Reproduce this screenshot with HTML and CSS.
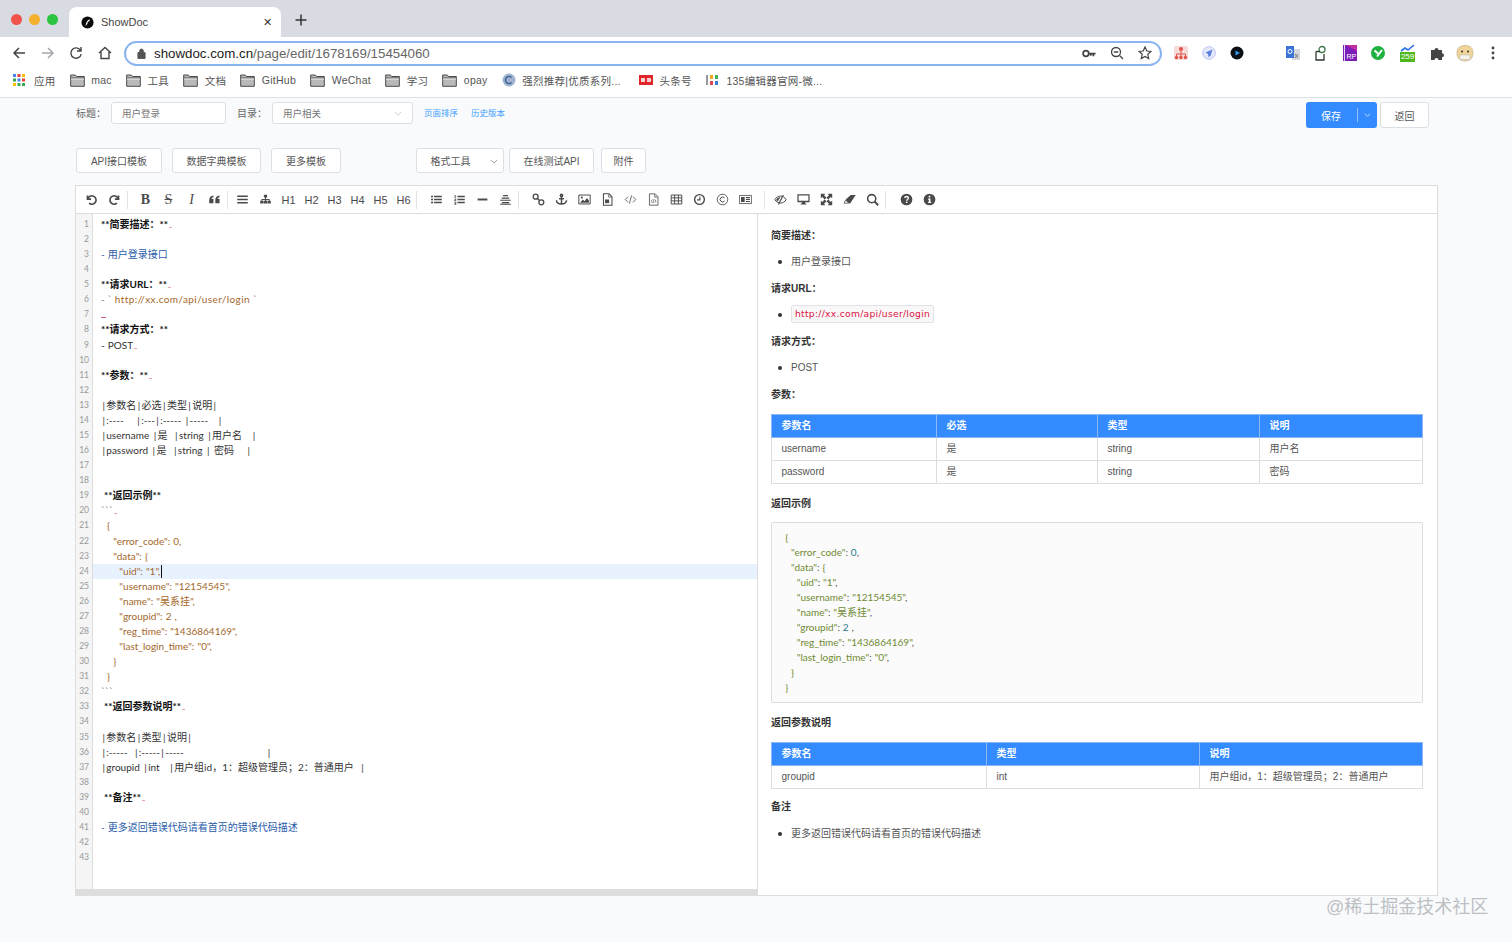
FILE: index.html
```html
<!DOCTYPE html>
<html lang="zh-CN">
  <head>
    <meta charset="utf-8">
    <title>ShowDoc</title>
    <link rel="stylesheet" href="styles.css">
  </head>
  <body>
    <svg class="sprite" width="0" height="0">
      <symbol id="i-undo" viewBox="0 0 16 16"><path d="M3 3v4.500h4.500M3.400 7.200A5.200 5.200 0 1 1 5 12.600" fill="none" stroke="currentColor" stroke-width="2"/></symbol>
      <symbol id="i-redo" viewBox="0 0 16 16"><path d="M13 3v4.500H8.500M12.600 7.200A5.200 5.200 0 1 0 11 12.600" fill="none" stroke="currentColor" stroke-width="2"/></symbol>
      <symbol id="i-quote" viewBox="0 0 16 16"><path d="M1.500 8.500C1.500 5.500 3.500 3.600 6.600 3.200v2C5 5.500 4.200 6.200 4.100 7.200h2.600v5.300H1.500zM9 8.500c0-3 2-4.900 5.100-5.300v2c-1.600.3-2.400 1-2.500 2h2.600v5.300H9z" fill="currentColor"/></symbol>
      <symbol id="i-bars" viewBox="0 0 16 16"><path d="M1.500 3h13v1.900h-13zM1.500 7h13v1.900h-13zM1.500 11h13v1.900h-13z" fill="currentColor"/></symbol>
      <symbol id="i-sitemap" viewBox="0 0 16 16"><path d="M6 2h4v3.500H8.600V7.400h4.400v2.100h1.500V13h-4V9.500h1.500V8.500H8.600v1H10V13H6V9.500h1.400v-1H4v1h1.500V13h-4V9.500H3V7.400h4.400V5.500H6z" fill="currentColor"/></symbol>
      <symbol id="i-ul" viewBox="0 0 16 16"><path d="M5 3.500h9.500v1.700H5zM5 7.200h9.500v1.700H5zM5 10.900h9.500v1.700H5z" fill="currentColor"/><circle cx="2.500" cy="4.300" r="1.300" fill="currentColor"/><circle cx="2.500" cy="8" r="1.300" fill="currentColor"/><circle cx="2.500" cy="11.700" r="1.300" fill="currentColor"/></symbol>
      <symbol id="i-ol" viewBox="0 0 16 16"><path d="M5.500 3.500h9v1.700h-9zM5.500 7.200h9v1.700h-9zM5.500 10.900h9v1.700h-9zM2 2.500h1.200v3.500H2zM1.500 7H4v.9L2.700 9.200H4v.8H1.500v-.8l1.300-1.400H1.500zM1.500 11H4v3.500H1.500v-.8h1.600v-.6H2v-.7h1.100v-.6H1.500z" fill="currentColor"/></symbol>
      <symbol id="i-minus" viewBox="0 0 16 16"><path d="M2 6.800h12v2.400H2z" fill="currentColor"/></symbol>
      <symbol id="i-pagebreak" viewBox="0 0 16 16"><path d="M5 2.500h6V4H5zM3.500 5.500h9V7h-9zM1.500 8.300h13v1.300h-13zM3.500 11h9v1.500h-9zM1.500 13.300h13v1.300h-13z" fill="currentColor"/></symbol>
      <symbol id="i-link" viewBox="0 0 16 16"><g fill="none" stroke="currentColor" stroke-width="1.600"><circle cx="4.500" cy="4.500" r="3"/><circle cx="11.500" cy="11.500" r="3"/><path d="M6.500 6.500l3 3"/></g></symbol>
      <symbol id="i-anchor" viewBox="0 0 16 16"><g fill="none" stroke="currentColor" stroke-width="1.800"><circle cx="8" cy="3" r="1.400"/><path d="M8 4.500v9.500M5 7h6M1.800 9c0 3 3 4.600 6.200 4.600S14.200 12 14.200 9"/></g></symbol>
      <symbol id="i-image" viewBox="0 0 16 16"><path d="M1 2.500h14v11H1z" fill="none" stroke="currentColor" stroke-width="1.200"/><path d="M2.500 12l3.500-4 2 2 3-4 2.500 3.500V12z" fill="currentColor"/><circle cx="4.800" cy="5.500" r="1.300" fill="currentColor"/></symbol>
      <symbol id="i-fileimg" viewBox="0 0 16 16"><path d="M3 1h7l3.500 3.500V15H3z" fill="none" stroke="currentColor" stroke-width="1.300"/><path d="M5 8h5v4.500H5z" fill="currentColor"/><path d="M9.500 1.500V5H13" fill="none" stroke="currentColor"/></symbol>
      <symbol id="i-code" viewBox="0 0 16 16"><path d="M5 4.500L1.500 8 5 11.500M11 4.500L14.500 8 11 11.500M9.300 3L6.700 13" fill="none" stroke="currentColor"/></symbol>
      <symbol id="i-filecode" viewBox="0 0 16 16"><path d="M3 1h7l3.500 3.500V15H3z" fill="none" stroke="currentColor"/><path d="M6.500 8L5 10l1.500 2M9.500 8l1.500 2-1.500 2M8.700 7.500l-1.400 5" fill="none" stroke="currentColor" stroke-width=".8"/><path d="M9.500 1.500V5H13" fill="none" stroke="currentColor"/></symbol>
      <symbol id="i-table" viewBox="0 0 16 16"><path d="M1.500 2.500h13v11h-13zM1.500 6h13M1.500 9.700h13M5.700 2.500v11M10.300 2.500v11" fill="none" stroke="currentColor" stroke-width="1.200"/></symbol>
      <symbol id="i-clock" viewBox="0 0 16 16"><circle cx="8" cy="8" r="6" fill="none" stroke="currentColor" stroke-width="1.700"/><path d="M8.500 4.500V8.500H5" fill="none" stroke="currentColor" stroke-width="1.400"/></symbol>
      <symbol id="i-copy" viewBox="0 0 16 16"><circle cx="8" cy="8" r="6.500" fill="none" stroke="currentColor" stroke-width="1.100"/><path d="M10.500 6.200A3 3 0 1 0 10.500 9.800" fill="none" stroke="currentColor" stroke-width="1.200"/></symbol>
      <symbol id="i-news" viewBox="0 0 16 16"><path d="M.5 3h15v10H.5z" fill="none" stroke="currentColor"/><path d="M2.500 4.800h4.500v6.400H2.500zM8.500 4.800h5v1.600h-5zM8.500 7.400h5v1.200h-5zM8.500 9.800h5v1.400h-5z" fill="currentColor"/></symbol>
      <symbol id="i-eyeoff" viewBox="0 0 16 16"><path d="M1 8.200C3 5 5.300 3.800 8 3.800s5 1.200 7 4.400c-2 3-4.300 4.200-7 4.200S3 11.200 1 8.200z" fill="none" stroke="currentColor" stroke-width="1.200"/><path d="M8 5l-3.500 5.500C3.600 9.900 3 9 2.700 8.200 4 6.400 6 5 8 5z" fill="currentColor"/><path d="M11.500 2.500L5.500 14" stroke="currentColor" stroke-width="1.400"/></symbol>
      <symbol id="i-desktop" viewBox="0 0 16 16"><path d="M.5 1.500h15v10h-5.500V13h1.500v1.300h-7V13H6v-1.500H.5zM2 3v6.500h12V3z" fill="currentColor"/></symbol>
      <symbol id="i-expand" viewBox="0 0 16 16"><path d="M1 1h5.500L5 2.800l3 3-2.200 2.200-3-3L1 6.500zM15 1v5.500L13.200 5l-3 3L8 5.800l3-3L9.500 1zM1 15V9.500L2.800 11l3-3L8 10.200l-3 3L6.500 15zM15 15H9.500L11 13.200l-3-3L10.200 8l3 3L15 9.500z" fill="currentColor"/></symbol>
      <symbol id="i-eraser" viewBox="0 0 16 16"><path d="M9.500 2.500H15.500L9 12.500H1L4 7.300z" fill="currentColor"/><path d="M3.300 8.500L7 12.500H1.500z" fill="#fff" stroke="currentColor" stroke-width=".8"/></symbol>
      <symbol id="i-search" viewBox="0 0 16 16"><circle cx="7" cy="7" r="5" fill="none" stroke="currentColor" stroke-width="1.900"/><path d="M10.500 10.500l4.500 4.500" stroke="currentColor" stroke-width="2.400"/></symbol>
      <symbol id="i-question" viewBox="0 0 16 16"><circle cx="8" cy="8" r="7.200" fill="currentColor"/><path d="M5.800 6.300C5.900 5 6.900 4.300 8.100 4.300c1.300 0 2.200.8 2.200 1.900 0 1.700-2.100 1.700-2.100 3.300" fill="none" stroke="#fff" stroke-width="1.600"/><path d="M7.300 10.500h1.800v1.800H7.300z" fill="#fff"/></symbol>
      <symbol id="i-info" viewBox="0 0 16 16"><circle cx="8" cy="8" r="7.200" fill="currentColor"/><path d="M7 3.300h2v2.100H7zM6.300 6.700h2.900v4.100h.8v1.500H6.300v-1.500h.9V8.200h-.9z" fill="#fff"/></symbol>
      <symbol id="i-folder" viewBox="0 0 15 13"><path d="M.7 12.300V1h4.600l1.300 1.500h7.700v9.800z" fill="#b9b9b9" stroke="#4a4a4a"/><path d="M1 4h13" stroke="#4a4a4a"/><path d="M1 4.500h13v1H1z" fill="#eee"/></symbol>
    </svg>

    <div class="tabstrip">
      <div class="lights">
        <span class="light red"></span><span class="light amber"></span><span class="light green"></span>
      </div>
      <div class="tab">
        <svg class="tab-icon" viewBox="0 0 14 14"><circle cx="7" cy="7" r="6.500" fill="#0b0b0b"/><path d="M5 11c.3-3 1-6 4.500-7.500L9 6H7.500L7 8z" fill="#fff"/></svg>
        <span class="tab-title">ShowDoc</span>
        <span class="tab-close">✕</span>
      </div>
      <span class="tab-new">
        <svg viewBox="0 0 12 12" width="12" height="12"><path d="M6 .5v11M.5 6h11" stroke="#333" stroke-width="1.500"/></svg>
      </span>
    </div>

    <div class="navbar">
      <div class="nav-buttons">
        <svg viewBox="0 0 14 14" width="14" height="14"><path d="M13 7H2M7 2L2 7l5 5" fill="none" stroke="#444" stroke-width="1.500"/></svg>
        <svg viewBox="0 0 14 14" width="14" height="14"><path d="M1 7h11M7 2l5 5-5 5" fill="none" stroke="#a5a7aa" stroke-width="1.500"/></svg>
        <svg viewBox="0 0 14 14" width="14" height="14"><path d="M11.600 4.500A5.200 5.200 0 1 0 12.200 8M12 1v4H8" fill="none" stroke="#444" stroke-width="1.400"/></svg>
        <svg viewBox="0 0 14 14" width="14" height="14"><path d="M1 7l6-5.500L13 7M3 6v6.500h8V6" fill="none" stroke="#444" stroke-width="1.400"/></svg>
      </div>
      <div class="omnibox">
        <svg viewBox="0 0 10 12" width="9" height="11"><path d="M1 5h8v6.500H1zM3 5V3a2 2 0 0 1 4 0v2" fill="#555" stroke="#555"/></svg>
        <span class="url"><span class="url-host">showdoc.com.cn</span>/page/edit/1678169/15454060</span>
        <span class="omni-actions">
          <svg viewBox="0 0 16 10" width="14" height="9"><circle cx="4.500" cy="5" r="3.200" fill="none" stroke="#444" stroke-width="2"/><path d="M7.500 4h8v2H14v2h-2V6h-1v1.500H9V6H7.500z" fill="#444"/></svg>
          <svg viewBox="0 0 14 14" width="14" height="14"><circle cx="6" cy="6" r="4.500" fill="none" stroke="#444" stroke-width="1.300"/><path d="M9.500 9.500L13 13M3.800 6h4.400" stroke="#444" stroke-width="1.300"/></svg>
          <svg viewBox="0 0 14 14" width="14" height="14"><path d="M7 1l1.800 4 4.200.4-3.200 2.900.9 4.300L7 10.400l-3.700 2.200.9-4.300L1 5.400 5.200 5z" fill="none" stroke="#444" stroke-width="1.200"/></svg>
        </span>
      </div>
      <div class="ext-group ext-left">
        <svg viewBox="0 0 14 14" width="14" height="14"><rect width="14" height="14" rx="2" fill="#f6dcd8"/><circle cx="7" cy="3" r="2" fill="#e0524a"/><path d="M7 5v3M2.500 11V8h9v3M7 8v3" stroke="#e0524a" fill="none"/><circle cx="2.500" cy="11.500" r="1.700" fill="#e0524a"/><circle cx="7" cy="11.500" r="1.700" fill="#e0524a"/><circle cx="11.500" cy="11.500" r="1.700" fill="#e0524a"/></svg>
        <svg viewBox="0 0 14 14" width="14" height="14"><circle cx="7" cy="7" r="6.300" fill="#e6e9fb" stroke="#b9c2f2"/><path d="M10.500 3.500L8.500 10 6.500 11l-.5-3L3.500 6.500z" fill="#5a7fe0"/></svg>
        <svg viewBox="0 0 14 14" width="14" height="14"><circle cx="7" cy="7" r="6.500" fill="#0c0f16"/><path d="M5.500 4.500l4.500 2.500-4.500 2.500z" fill="#2f9bf0"/></svg>
      </div>
      <div class="ext-group ext-right">
        <svg viewBox="0 0 14 16" width="14" height="16"><path d="M7 4h7v11H6z" fill="#d5d8dc"/><path d="M0 1h8v12H0z" fill="#3b73d9"/><circle cx="4" cy="6.500" r="2" fill="none" stroke="#fff"/><path d="M9 9l3 4M12 9l-3 4" stroke="#777"/></svg>
        <svg viewBox="0 0 14 16" width="14" height="16"><path d="M2 6.500V15h8V9" fill="none" stroke="#2b3a30" stroke-width="1.300"/><circle cx="8" cy="4.500" r="3" fill="none" stroke="#3f7a4e" stroke-width="1.300"/><path d="M2 6.500h4" stroke="#2b3a30" stroke-width="1.300"/></svg>
        <svg viewBox="0 0 14 16" width="14" height="16"><path d="M0 0h14v16H0z" fill="#7b1fb8"/><path d="M3 0h11v6z" fill="#c02fa0"/><path d="M1.500 0v16" stroke="#e8d5f5"/><text x="3.500" y="14" font-size="7" fill="#fff" font-family="Liberation Sans">RP</text></svg>
        <svg viewBox="0 0 14 14" width="14" height="14"><circle cx="7" cy="7" r="7" fill="#1fb141"/><path d="M3.500 4.500L7 7.500M11 4L6 10.500" stroke="#fff" stroke-width="2" fill="none"/></svg>
        <span class="ext-badge-wrap">
          <svg viewBox="0 0 16 8" width="16" height="8"><path d="M1 7l4-3 3 2 6-5" fill="none" stroke="#2a6fe0" stroke-width="1.600"/></svg>
          <span class="ext-badge">259</span>
        </span>
        <svg viewBox="0 0 14 14" width="14" height="14"><path d="M1 4h3.500a2 2 0 1 1 4 0H12v3.300a2 2 0 1 1 0 4V14H8.500a2 2 0 1 0-4 0H1z" fill="#444"/></svg>
        <svg class="ext-avatar" viewBox="0 0 18 18" width="18" height="18"><path d="M1 9C1 4 4 1.500 9 1.500S17 4 17 9s-3 8-8 8-8-3-8-8z" fill="#f0d49a" stroke="#c9b68d" stroke-width=".8"/><circle cx="6" cy="7.500" r="1" fill="#333"/><circle cx="12" cy="7.500" r="1" fill="#333"/><path d="M4 11h10v4.500H4z" fill="#f4f2ec" stroke="#bbb" stroke-width=".5"/></svg>
        <svg viewBox="0 0 4 14" width="4" height="14"><circle cx="2" cy="2" r="1.400" fill="#444"/><circle cx="2" cy="7" r="1.400" fill="#444"/><circle cx="2" cy="12" r="1.400" fill="#444"/></svg>
      </div>
    </div>

    <div class="bookmarks">
      <span class="mark mark-apps">
        <svg viewBox="0 0 12 12" width="12" height="12"><g fill="#4285f4"><rect width="3" height="3"/><rect x="4.500" y="4.500" width="3" height="3"/></g><g fill="#ea4335"><rect x="4.500" width="3" height="3"/><rect x="9" y="4.500" width="3" height="3"/></g><g fill="#fbbc05"><rect x="9" width="3" height="3"/><rect y="9" width="3" height="3"/></g><g fill="#34a853"><rect y="4.500" width="3" height="3"/><rect x="4.500" y="9" width="3" height="3"/><rect x="9" y="9" width="3" height="3"/></g></svg>
        应用
      </span>
      <span class="mark"><svg class="folder"><use href="#i-folder"/></svg>mac</span>
      <span class="mark"><svg class="folder"><use href="#i-folder"/></svg>工具</span>
      <span class="mark"><svg class="folder"><use href="#i-folder"/></svg>文档</span>
      <span class="mark"><svg class="folder"><use href="#i-folder"/></svg>GitHub</span>
      <span class="mark"><svg class="folder"><use href="#i-folder"/></svg>WeChat</span>
      <span class="mark"><svg class="folder"><use href="#i-folder"/></svg>学习</span>
      <span class="mark"><svg class="folder"><use href="#i-folder"/></svg>opay</span>
      <span class="mark">
        <svg viewBox="0 0 14 14" width="14" height="14"><circle cx="7" cy="7" r="6.500" fill="#9fb3cf"/><path d="M9.500 4.500a3.500 3.500 0 1 0 0 5" fill="none" stroke="#3f5f94" stroke-width="1.500"/></svg>
        强烈推荐|优质系列...
      </span>
      <span class="mark mark-red">
        <svg viewBox="0 0 14 10" width="14" height="10"><rect width="14" height="10" fill="#e0252b"/><path d="M2 3h4v4H2zM8 3h4v4H8z" fill="#fff" opacity=".8"/></svg>
        头条号
      </span>
      <span class="mark">
        <svg viewBox="0 0 14 14" width="14" height="14"><path d="M1 2v10" stroke="#333"/><path d="M4 2h3v4H4z" fill="#f2a61f"/><path d="M4 8h3v4H4z" fill="#e0474c"/><path d="M9 2h3v4H9z" fill="#3fae5a"/><path d="M9 8h3v4H9z" fill="#3b7fd9"/></svg>
        135编辑器官网-微...
      </span>
    </div>

    <div class="page">
      <div class="title-row">
        <label class="field-label">标题：</label>
        <span class="input input-title">用户登录</span>
        <label class="field-label label-cat">目录：</label>
        <span class="input input-cat">用户相关<svg class="chev" viewBox="0 0 10 6" width="8" height="5"><path d="M1 1l4 4 4-4" fill="none" stroke="#c0c4cc"/></svg></span>
        <a class="text-link link-sort">页面排序</a>
        <a class="text-link">历史版本</a>
        <span class="save-group">
          <span class="btn-save">保存</span>
          <span class="btn-save-drop"><svg viewBox="0 0 10 6" width="7" height="4"><path d="M1 1l4 4 4-4" fill="none" stroke="#fff"/></svg></span>
        </span>
        <span class="btn btn-back">返回</span>
      </div>

      <div class="tpl-row">
        <span class="btn btn-api">API接口模板</span>
        <span class="btn btn-dict">数据字典模板</span>
        <span class="btn btn-more">更多模板</span>
        <span class="btn btn-format">格式工具<svg class="chev" viewBox="0 0 10 6" width="8" height="5"><path d="M1 1l4 4 4-4" fill="none" stroke="#888"/></svg></span>
        <span class="btn btn-test">在线测试API</span>
        <span class="btn btn-attach">附件</span>
      </div>

      <div class="editor">
        <div class="toolbar">
          <span class="tool"><svg><use href="#i-undo"/></svg></span>
          <span class="tool"><svg><use href="#i-redo"/></svg></span>
          <span class="sep"></span>
          <span class="tool tool-b">B</span>
          <span class="tool tool-s">S</span>
          <span class="tool tool-i">I</span>
          <span class="tool"><svg><use href="#i-quote"/></svg></span>
          <span class="sep sep-a"></span>
          <span class="tool"><svg><use href="#i-bars"/></svg></span>
          <span class="tool"><svg><use href="#i-sitemap"/></svg></span>
          <span class="tool tool-h">H1</span>
          <span class="tool tool-h">H2</span>
          <span class="tool tool-h">H3</span>
          <span class="tool tool-h">H4</span>
          <span class="tool tool-h">H5</span>
          <span class="tool tool-h">H6</span>
          <span class="sep sep-b"></span>
          <span class="tool"><svg><use href="#i-ul"/></svg></span>
          <span class="tool"><svg><use href="#i-ol"/></svg></span>
          <span class="tool"><svg><use href="#i-minus"/></svg></span>
          <span class="tool"><svg><use href="#i-pagebreak"/></svg></span>
          <span class="sep sep-b"></span>
          <span class="tool"><svg><use href="#i-link"/></svg></span>
          <span class="tool"><svg><use href="#i-anchor"/></svg></span>
          <span class="tool"><svg><use href="#i-image"/></svg></span>
          <span class="tool"><svg><use href="#i-fileimg"/></svg></span>
          <span class="tool"><svg><use href="#i-code"/></svg></span>
          <span class="tool"><svg><use href="#i-filecode"/></svg></span>
          <span class="tool"><svg><use href="#i-table"/></svg></span>
          <span class="tool"><svg><use href="#i-clock"/></svg></span>
          <span class="tool"><svg><use href="#i-copy"/></svg></span>
          <span class="tool"><svg><use href="#i-news"/></svg></span>
          <span class="sep sep-wide"></span>
          <span class="tool"><svg><use href="#i-eyeoff"/></svg></span>
          <span class="tool"><svg><use href="#i-desktop"/></svg></span>
          <span class="tool"><svg><use href="#i-expand"/></svg></span>
          <span class="tool"><svg><use href="#i-eraser"/></svg></span>
          <span class="tool"><svg><use href="#i-search"/></svg></span>
          <span class="sep sep-last"></span>
          <span class="tool"><svg><use href="#i-question"/></svg></span>
          <span class="tool"><svg><use href="#i-info"/></svg></span>
        </div>

        <div class="panes">
          <div class="source">
            <div class="lines">
              <div class="ln"><span class="no">1</span><span class="code"><b>**简要描述：**</b><i class="ts"></i></span></div>
              <div class="ln"><span class="no">2</span><span class="code"></span></div>
              <div class="ln"><span class="no">3</span><span class="code li">- 用户登录接口</span></div>
              <div class="ln"><span class="no">4</span><span class="code"></span></div>
              <div class="ln"><span class="no">5</span><span class="code"><b>**请求URL：**</b><i class="ts"></i></span></div>
              <div class="ln"><span class="no">6</span><span class="code"><span class="gray">- ` </span><span class="str url-code">http://xx.com/api/user/login</span><span class="gray"> `</span></span></div>
              <div class="ln"><span class="no">7</span><span class="code"><i class="ts ts-wide"></i></span></div>
              <div class="ln"><span class="no">8</span><span class="code"><b>**请求方式：**</b></span></div>
              <div class="ln"><span class="no">9</span><span class="code">- POST<i class="ts"></i></span></div>
              <div class="ln"><span class="no">10</span><span class="code"></span></div>
              <div class="ln"><span class="no">11</span><span class="code"><b>**参数：**</b><i class="ts"></i></span></div>
              <div class="ln"><span class="no">12</span><span class="code"></span></div>
              <div class="ln"><span class="no">13</span><span class="code"><i class="p">|</i>参数名<i class="p">|</i>必选<i class="p">|</i>类型<i class="p">|</i>说明<i class="p">|</i></span></div>
              <div class="ln"><span class="no">14</span><span class="code"><i class="p">|</i>:----    <i class="p">|</i>:---<i class="p">|</i>:----- <i class="p">|</i>-----   <i class="p">|</i></span></div>
              <div class="ln"><span class="no">15</span><span class="code"><i class="p">|</i>username <i class="p">|</i>是  <i class="p">|</i>string <i class="p">|</i>用户名   <i class="p">|</i></span></div>
              <div class="ln"><span class="no">16</span><span class="code"><i class="p">|</i>password <i class="p">|</i>是  <i class="p">|</i>string <i class="p">|</i> 密码    <i class="p">|</i></span></div>
              <div class="ln"><span class="no">17</span><span class="code"></span></div>
              <div class="ln"><span class="no">18</span><span class="code"></span></div>
              <div class="ln"><span class="no">19</span><span class="code"><b> **返回示例**</b></span></div>
              <div class="ln"><span class="no">20</span><span class="code gray">```<i class="ts"></i></span></div>
              <div class="ln"><span class="no">21</span><span class="code str">  {</span></div>
              <div class="ln"><span class="no">22</span><span class="code str">    "error_code": 0,</span></div>
              <div class="ln"><span class="no">23</span><span class="code str">    "data": {</span></div>
              <div class="ln ln-active"><span class="no">24</span><span class="code str">      "uid": "1",<i class="caret"></i></span></div>
              <div class="ln"><span class="no">25</span><span class="code str">      "username": "12154545",</span></div>
              <div class="ln"><span class="no">26</span><span class="code str">      "name": "吴系挂",</span></div>
              <div class="ln"><span class="no">27</span><span class="code str">      "groupid": 2 ,</span></div>
              <div class="ln"><span class="no">28</span><span class="code str">      "reg_time": "1436864169",</span></div>
              <div class="ln"><span class="no">29</span><span class="code str">      "last_login_time": "0",</span></div>
              <div class="ln"><span class="no">30</span><span class="code str">    }</span></div>
              <div class="ln"><span class="no">31</span><span class="code str">  }</span></div>
              <div class="ln"><span class="no">32</span><span class="code gray">```</span></div>
              <div class="ln"><span class="no">33</span><span class="code"><b> **返回参数说明**</b><i class="ts"></i></span></div>
              <div class="ln"><span class="no">34</span><span class="code"></span></div>
              <div class="ln"><span class="no">35</span><span class="code"><i class="p">|</i>参数名<i class="p">|</i>类型<i class="p">|</i>说明<i class="p">|</i></span></div>
              <div class="ln"><span class="no">36</span><span class="code"><i class="p">|</i>:-----  <i class="p">|</i>:-----<i class="p">|</i>-----                           <i class="p">|</i></span></div>
              <div class="ln"><span class="no">37</span><span class="code"><i class="p">|</i>groupid <i class="p">|</i>int   <i class="p">|</i>用户组id，1：超级管理员；2：普通用户  <i class="p">|</i></span></div>
              <div class="ln"><span class="no">38</span><span class="code"></span></div>
              <div class="ln"><span class="no">39</span><span class="code"><b> **备注**</b><i class="ts"></i></span></div>
              <div class="ln"><span class="no">40</span><span class="code"></span></div>
              <div class="ln"><span class="no">41</span><span class="code li">- 更多返回错误代码请看首页的错误代码描述</span></div>
              <div class="ln"><span class="no">42</span><span class="code"></span></div>
              <div class="ln"><span class="no">43</span><span class="code"></span></div>
            </div>
            <div class="hscroll"></div>
          </div>

          <div class="preview">
            <p class="h">简要描述：</p>
            <ul><li>用户登录接口</li></ul>
            <p class="h">请求URL：</p>
            <ul><li><code>http://xx.com/api/user/login</code></li></ul>
            <p class="h">请求方式：</p>
            <ul><li>POST</li></ul>
            <p class="h h-table">参数：</p>
            <table>
              <colgroup><col class="c165"><col class="c161"><col class="c162"><col></colgroup>
              <tr><th>参数名</th><th>必选</th><th>类型</th><th>说明</th></tr>
              <tr><td>username</td><td>是</td><td>string</td><td>用户名</td></tr>
              <tr><td>password</td><td>是</td><td>string</td><td>密码</td></tr>
            </table>
            <p class="h h-pre">返回示例</p>
            <div class="pre">
              <div class="pl">  <span class="s">{</span></div>
              <div class="pl">    <span class="s">"error_code"</span>: <span class="n">0</span>,</div>
              <div class="pl">    <span class="s">"data"</span>: <span class="s">{</span></div>
              <div class="pl">      <span class="s">"uid"</span>: <span class="s">"1"</span>,</div>
              <div class="pl">      <span class="s">"username"</span>: <span class="s">"12154545"</span>,</div>
              <div class="pl">      <span class="s">"name"</span>: <span class="s">"吴系挂"</span>,</div>
              <div class="pl">      <span class="s">"groupid"</span>: <span class="n">2</span> ,</div>
              <div class="pl">      <span class="s">"reg_time"</span>: <span class="s">"1436864169"</span>,</div>
              <div class="pl">      <span class="s">"last_login_time"</span>: <span class="s">"0"</span>,</div>
              <div class="pl">    <span class="s">}</span></div>
              <div class="pl">  <span class="s">}</span></div>
            </div>
            <p class="h h-table h-table2">返回参数说明</p>
            <table>
              <colgroup><col class="c215"><col class="c213"><col></colgroup>
              <tr><th>参数名</th><th>类型</th><th>说明</th></tr>
              <tr><td>groupid</td><td>int</td><td>用户组id，1：超级管理员；2：普通用户</td></tr>
            </table>
            <p class="h h-after">备注</p>
            <ul><li>更多返回错误代码请看首页的错误代码描述</li></ul>
          </div>
        </div>
      </div>
    </div>

    <div class="watermark">@稀土掘金技术社区</div>
  </body>
</html>
```

FILE: styles.css
```css
* { box-sizing: border-box; }
html, body { margin: 0; height: 942px; overflow: hidden; }
body { position: relative; background: #f9fafb; color: #444; font: 10px "Liberation Sans", "Noto Sans CJK SC", sans-serif; }
.sprite { position: absolute; }

/* browser chrome */
.tabstrip { display: flex; align-items: flex-end; height: 37px; background: #d8dbe1; }
.lights { display: flex; gap: 7px; align-self: center; padding: 0 0 0 11px; width: 69px; margin-top: 1px; }
.light { width: 11px; height: 11px; border-radius: 50%; }
.light.red { background: #f2544c; }
.light.amber { background: #f5b02e; }
.light.green { background: #2bc440; }
.tab { display: flex; align-items: center; width: 212px; height: 30px; background: #fff; border-radius: 8px 8px 0 0; padding: 0 9px 0 12px; }
.tab-icon { width: 13px; height: 13px; }
.tab-title { margin-left: 7px; font-size: 11px; color: #444; flex: 1; }
.tab-close { font-size: 10.500px; color: #333; }
.tab-new { align-self: center; margin: 2px 0 0 14px; display: flex; }

.navbar { display: flex; align-items: center; height: 32px; background: #fff; }
.nav-buttons { display: flex; gap: 14.500px; width: 124px; padding-left: 12px; }
.omnibox { display: flex; align-items: center; width: 1038px; height: 25px; border: 2px solid #8ab4f0; border-radius: 13px; padding: 0 8px 0 11px; }
.url { margin-left: 8px; font-size: 13.300px; color: #666; }
.url-host { color: #222; }
.omni-actions { display: flex; align-items: center; gap: 14px; margin-left: auto; }
.ext-group { display: flex; align-items: center; }
.ext-left { gap: 14px; margin-left: 12px; }
.ext-right { gap: 14.400px; margin-left: 42px; }
.ext-avatar { margin: 0 2px 0 -2px; }
.ext-badge-wrap { display: flex; flex-direction: column; align-items: center; width: 16px; }
.ext-badge { background: #4fb81f; color: #fff; font-size: 8px; line-height: 10px; padding: 0 1px; }

.bookmarks { display: flex; align-items: center; gap: 14.200px; height: 29px; padding: 0 0 6px 13px; background: #fff; border-bottom: 1px solid #dfe1e5; font-size: 10.500px; color: #555; }
.mark { display: flex; align-items: center; gap: 6.500px; letter-spacing: .25px; white-space: nowrap; }
.mark-apps { gap: 9px; }
.mark-red { margin-left: 4px; }
.folder { width: 15px; height: 13px; }

/* page */
.page { padding: 4px 74px 0 75px; }
.title-row { display: flex; align-items: flex-start; height: 47px; }
.field-label { width: 36px; padding-left: 1px; line-height: 23px; color: #666; }
.label-cat { margin-left: 10px; }
.input { display: flex; align-items: center; height: 22px; background: #fff; border: 1px solid #dcdfe6; border-radius: 3px; padding: 0 10px; color: #777; font-size: 9.500px; }
.input-title { width: 115px; }
.input-cat { width: 141px; justify-content: space-between; }
.text-link { color: #409eff; font-size: 8.500px; line-height: 23px; margin-left: 13px; }
.link-sort { margin-left: 11px; }
.save-group { display: flex; align-items: center; height: 26px; margin-left: auto; background: #338bff; border-radius: 3px; color: #fff; }
.btn-save { width: 51px; padding-left: 15px; }
.btn-save-drop { display: flex; align-items: center; justify-content: center; width: 20px; height: 14px; border-left: 1px solid #8fc0ff; }
.btn { display: flex; align-items: center; justify-content: center; height: 25px; background: #fff; border: 1px solid #dcdfe6; border-radius: 3px; color: #555; }
.btn-back { width: 49px; height: 26px; margin: 0 9px 0 3px; }

.tpl-row { display: flex; height: 36px; margin-top: -1px; }
.btn-api { width: 86px; margin-left: 1px; }
.btn-dict { width: 89px; margin-left: 10px; }
.btn-more { width: 70px; margin-left: 10px; }
.btn-format { width: 88px; margin-left: 75px; position: relative; padding-right: 19px; }
.btn-format .chev { position: absolute; right: 5px; top: 10px; }
.btn-test { width: 85px; margin-left: 5px; }
.btn-attach { width: 45px; margin-left: 7px; }

/* editor */
.editor { border: 1px solid #ddd; background: #fff; height: 711px; margin-top: 1px; }
.toolbar { display: flex; align-items: center; height: 28px; padding-left: 4px; border-bottom: 1px solid #ddd; color: #4a4a4a; }
.tool { display: flex; align-items: center; justify-content: center; flex: none; width: 23px; height: 26px; }
.tool svg { width: 13px; height: 13px; }
.tool-b, .tool-s, .tool-i { font: 14px "Liberation Serif", serif; }
.tool-b { font-weight: bold; }
.tool-s { text-decoration: line-through; }
.tool-i { font-style: italic; }
.tool-h { font-size: 11px; }
.sep { flex: none; width: 1px; height: 18px; background: #e2e2e2; margin: 0 6px 0 1px; }
.sep-a { margin-right: 3px; }
.sep-b { margin-right: 8px; }
.sep-wide { margin-left: 7px; margin-right: 4px; }
.sep-last { margin-right: 9px; }

.panes { display: flex; height: 681px; }
.source { position: relative; width: 682px; flex: none; background: linear-gradient(90deg, #f5f5f5 16px, #ddd 16px, #ddd 17px, #fff 17px); border-right: 1px solid #ddd; }
.lines { padding-top: 2.900px; }
.ln { display: flex; height: 15.080px; line-height: 15.080px; }
.no { flex: none; width: 13px; text-align: right; color: #999; font-size: 8.500px; font-family: "Lato", sans-serif; }
.code { flex: 1; margin-left: 12px; white-space: pre; word-spacing: .5px; font-family: "Lato", "Noto Sans CJK SC", sans-serif; color: #333; }
.code b { color: #111; font-weight: bold; }
.ln-active .code { background: #e8f2ff; margin-left: 4px; padding-left: 8px; }
.li { color: #2a5caa; }
.gray { color: #777; }
.str { color: #a5672b; }
.url-code { letter-spacing: .4px; }
.p { font-style: normal; margin: 0 1.400px; }
.ts { display: inline-block; width: 3px; height: 1px; margin-left: 1px; background: #e9a0b0; }
.ts-wide { width: 5px; margin-left: 0; background: #d0637f; }
.caret { display: inline-block; width: 1px; height: 13px; background: #111; vertical-align: -3px; margin-left: 1px; }
.hscroll { position: absolute; left: 0; right: 0; bottom: 0; height: 6px; background: #ddd; }

.preview { flex: 1; padding: 12.500px 14px 0 13px; line-height: 17px; color: #555; }
.preview .h { margin: 0 0 9.500px; font-weight: bold; color: #333; }
.preview ul { margin: 0 0 9.500px; padding-left: 20px; list-style: none; }
.preview li { height: 17px; line-height: 17px; }
.preview li::before { content: ""; display: inline-block; width: 4px; height: 4px; margin: 0 9px 1px -13px; border-radius: 50%; background: #333; vertical-align: middle; }
.preview code { display: inline-block; height: 18px; margin: -1px 0; padding: 0 3px; background: #f8f8f8; border: 1px solid #e1e1e8; border-radius: 2px; color: #d14; font: 9.200px/16px "DejaVu Sans", sans-serif; letter-spacing: .28px; vertical-align: top; }
.preview .h-table { margin-bottom: 11.500px; }
.preview .h-table2 { margin-bottom: 10.500px; }
.preview table { width: 100%; margin-bottom: 11px; border-collapse: collapse; table-layout: fixed; }
.preview th, .preview td { height: 23px; padding: 0 9.500px 1px; border: 1px solid #ddd; text-align: left; }
.preview th { background: #338bff; color: #fff; border-color: #8ab9f5; }
.c165 { width: 165px; }
.c161 { width: 161px; }
.c162 { width: 162px; }
.c215 { width: 215px; }
.c213 { width: 213px; }
.preview .h-pre { margin-bottom: 10px; }
.pre { height: 181px; margin: 0 0 11px; padding: 6.500px 7.500px; background: #fbfbfb; border: 1px solid #ddd; border-radius: 2px; font: 10px/15.100px "Lato", "Noto Sans CJK SC", sans-serif; word-spacing: .3px; color: #555; }
.pl { height: 15.100px; white-space: pre; }
.s { color: #6f8a32; }
.n { color: #1f7a8c; }
.preview .h-after { margin-top: -2px; margin-bottom: 10.500px; }

.watermark { position: absolute; left: 1326px; top: 894px; font-size: 18px; line-height: 26px; color: #bcc0c4; white-space: nowrap; }
```
